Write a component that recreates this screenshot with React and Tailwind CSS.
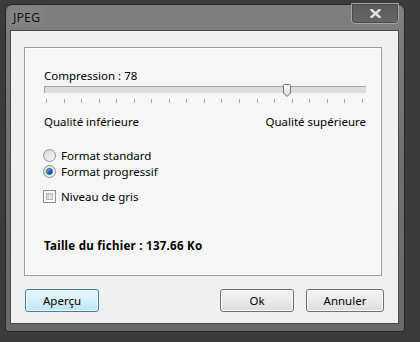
import React from "react";

const ticks = Array.from({ length: 19 }, (_, i) => i);

const Radio = ({ checked, label }) => (
  <div className="flex items-center h-[16px]">
    <span className="w-[13px] h-[13px] rounded-full border border-[#8e8f8f] bg-gradient-to-br from-[#d4d4d4] to-[#fbfbfb] flex items-center justify-center">
      {checked && (
        <span className="w-[7px] h-[7px] rounded-full bg-gradient-to-br from-[#8ac5f0] via-[#1f6fb8] to-[#0b4a8a] border border-[#1c5a96]" />
      )}
    </span>
    <span className="ml-[5px]">{label}</span>
  </div>
);

const Button = ({ children, width, primary }) => (
  <button
    className={
      primary
        ? `${width} h-[23px] rounded-[3px] border border-[#3c7fb1] bg-gradient-to-b from-[#eaf6fd] via-[#d9effc] to-[#bde3f8] shadow-[inset_0_0_0_1px_#f4fbff] text-black`
        : `${width} h-[23px] rounded-[3px] border border-[#707070] bg-gradient-to-b from-[#f3f3f3] via-[#ebebeb] to-[#dcdcdc] shadow-[inset_0_0_0_1px_#fbfbfb] text-black`
    }
  >
    {children}
  </button>
);

export default function App() {
  return (
    <div className="w-[420px] h-[342px] bg-[#3b3b3b] pt-[4px] pl-[5px] font-['Noto_Sans',sans-serif] text-[11.5px] leading-[15px] text-black overflow-hidden">
      <div className="w-[400px] h-[328px] rounded-t-[7px] rounded-b-[3px] border border-[#262626] bg-gradient-to-b from-[#7f7f7f] via-[#6f6f6f] to-[#696969] flex flex-col">
        {/* title bar */}
        <div className="h-[25px] flex items-start justify-between">
          <div className="pl-[7px] pt-[5px] text-[12.5px] text-[#111] [text-shadow:0_0_8px_#b5b5b5]">JPEG</div>
          <div className="-mt-[2px] mr-[5px] w-[48px] h-[21px] rounded-b-[4px] border border-[#a6a6a6] bg-gradient-to-b from-[#5b5b5b] to-[#666666] shadow-[inset_0_0_0_1px_#4a4a4a] flex items-center justify-center">
            <svg width="11" height="9" viewBox="0 0 11 9">
              <path d="M1.5 1 L9.5 8 M9.5 1 L1.5 8" stroke="#e4e4e4" strokeWidth="2.4" strokeLinecap="square" />
            </svg>
          </div>
        </div>

        {/* client area */}
        <div className="ml-[4px] mr-[5px] h-[294px] border border-[#4a4a4a] bg-[#f0f0f0] flex flex-col">
          <div className="mt-[16px] ml-[13px] mr-[16px] h-[229px] border border-[#9c9c9c] bg-[#f6f6f6] shadow-[inset_0_0_0_1px_#ffffff] pl-[19px] pr-[15px] pt-[20px]">
            <div>Compression : 78</div>

            {/* slider */}
            <div className="relative mt-[3px]">
              <div className="h-[7px] border-t border-l border-[#a3a3a3] bg-[#dddddd]" />
              <svg className="absolute left-[239px] -top-[2px]" width="8" height="13" viewBox="0 0 8 13">
                <defs>
                  <linearGradient id="th" x1="0" y1="0" x2="0" y2="1">
                    <stop offset="0" stopColor="#fbfbfb" />
                    <stop offset="1" stopColor="#dadada" />
                  </linearGradient>
                </defs>
                <path d="M0.5 1.5 Q0.5 0.5 1.5 0.5 H6.5 Q7.5 0.5 7.5 1.5 V9 L4 12.5 L0.5 9 Z" fill="url(#th)" stroke="#6f6f6f" />
              </svg>
              <div className="flex justify-between pl-[2px] pr-[3px] mt-[6px]">
                {ticks.map((t) => (
                  <span key={t} className="w-[1px] h-[4px] bg-[#a8a8a8]" />
                ))}
              </div>
            </div>

            <div className="flex justify-between mt-[11px]">
              <span>Qualité inférieure</span>
              <span>Qualité supérieure</span>
            </div>

            {/* options */}
            <div className="mt-[18px] -ml-[1px] flex flex-col">
              <Radio label="Format standard" />
              <Radio checked label="Format progressif" />
              <div className="flex items-center h-[16px] mt-[9px]">
                <span className="w-[13px] h-[13px] border border-[#8e8f8f] bg-white p-[2px]">
                  <span className="block w-full h-full bg-gradient-to-br from-[#cbcbcb] to-[#f4f4f4] border border-[#b8b8b8]" />
                </span>
                <span className="ml-[5px]">Niveau de gris</span>
              </div>
            </div>

            <div className="mt-[34px] font-bold tracking-[0.28px]">Taille du fichier : 137.66 Ko</div>
          </div>

          {/* buttons */}
          <div className="flex items-center mt-[13px] ml-[14px] mr-[14px]">
            <Button width="w-[74px]" primary>Aperçu</Button>
            <div className="flex-1" />
            <Button width="w-[74px]">Ok</Button>
            <div className="w-[12px]" />
            <Button width="w-[78px]">Annuler</Button>
          </div>
        </div>
      </div>
    </div>
  );
}
